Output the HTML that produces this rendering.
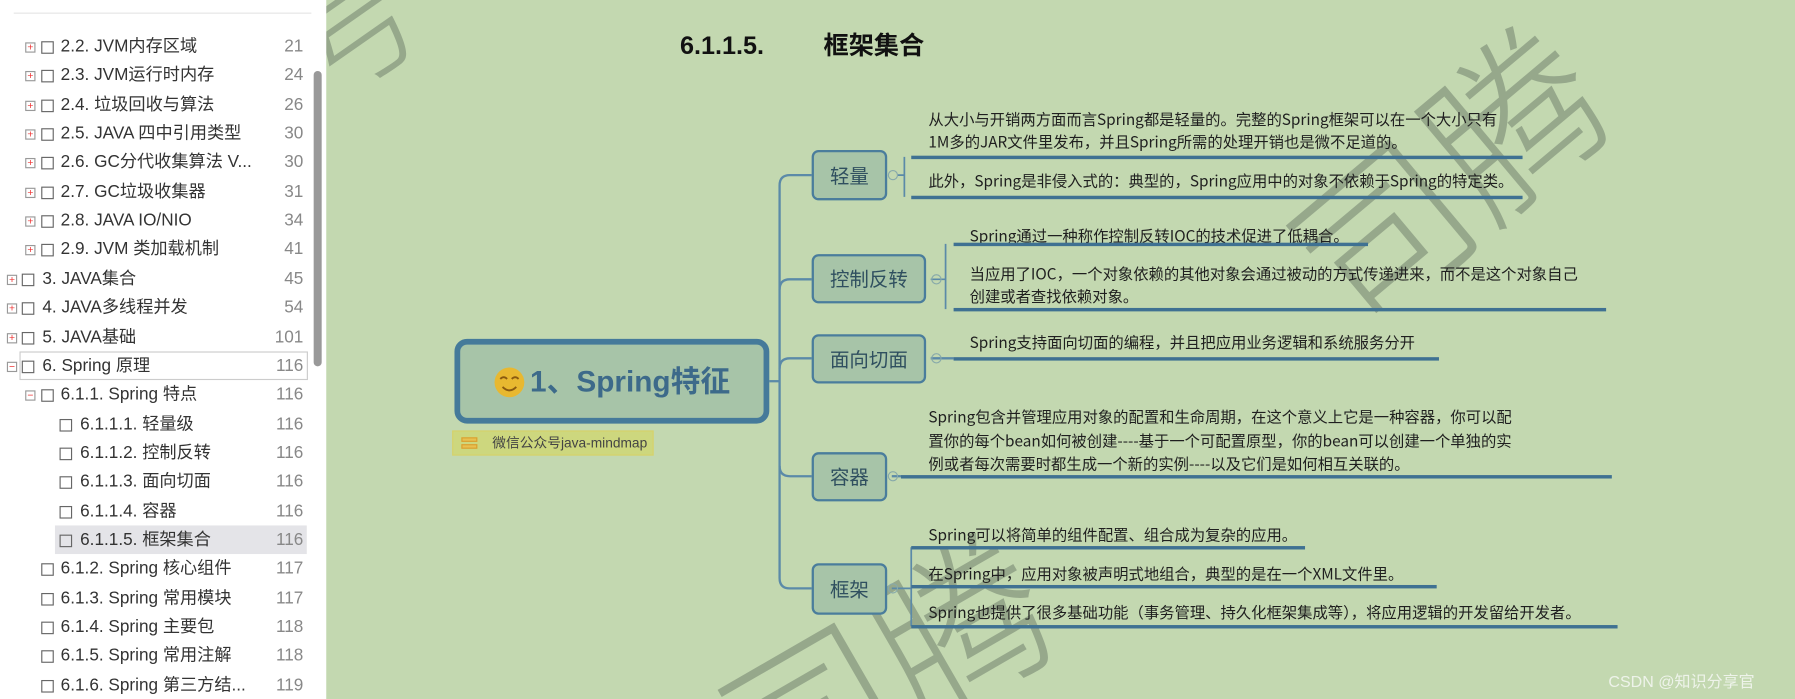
<!DOCTYPE html>
<html><head><meta charset="utf-8"><style>
*{margin:0;padding:0;box-sizing:border-box}
html,body{width:1795px;height:699px;overflow:hidden}
body{background:#c3d8b0;font-family:"Liberation Sans","Noto Sans CJK SC",sans-serif;position:relative}
#w{position:absolute;left:0;top:0;width:1568px;height:611px;transform:scale(1.14477);transform-origin:0 0;overflow:hidden;background:#c3d8b0}
.a{position:absolute;white-space:nowrap}
#sb{position:absolute;left:0;top:0;width:285px;height:611px;background:#fff}
.r{position:absolute;height:22px;line-height:22px;font-size:15px;color:#333}
.n{position:absolute;right:20px;color:#888;font-size:15px}
.pl{position:absolute;width:9px;height:9px;border:1px solid #999;top:7px;font-size:9px;line-height:7px;text-align:center;color:#e33}
.bk{position:absolute;width:11px;height:11px;border:1px solid #666;top:6px}
.node{position:absolute;background:#a7c4a8;border:2.5px solid #4a7d9c;border-radius:6px;font-size:17px;color:#2f4f5f;text-align:center;font-family:"Noto Sans CJK SC",sans-serif}
.t{position:absolute;font-size:13.4px;color:#1f1f1f;white-space:nowrap;line-height:20px;font-family:"Noto Sans CJK SC",sans-serif}
.u{position:absolute;height:3px;background:#3f7192}
.wm{position:absolute;font-size:150px;color:rgba(95,110,95,.45);font-family:"Noto Sans CJK SC",sans-serif;font-weight:300;white-space:nowrap}
</style></head><body><div id="w">
<div class="wm" style="left:1110px;top:40px;transform:rotate(-40deg)">司腾</div>
<div class="wm" style="left:620px;top:470px;transform:rotate(-30deg)">司腾</div>
<div class="wm" style="left:240px;top:-70px;transform:rotate(-35deg);font-size:120px">号</div>
<div id="sb">
<div style="position:absolute;left:12px;top:11px;width:260px;height:1px;background:#e6e6e6"></div>
<div style="position:absolute;left:274px;top:62px;width:7px;height:258px;background:#999;border-radius:4px"></div>
<div style="position:absolute;left:17px;top:307px;width:252px;height:25px;border:1px solid #ccc"></div>
<div style="position:absolute;left:48px;top:459px;width:220px;height:25px;background:#e4e4e8"></div>
</div>
<div id="rows"></div>
<div class="a" style="left:594px;top:22px;font-size:22px;font-weight:bold;color:#111;font-family:'Liberation Sans','Noto Sans CJK SC',sans-serif">6.1.1.5.<span style="margin-left:52px">框架集合</span></div>
<svg class="a" style="left:0;top:0" width="1568" height="611">
<g fill="none" stroke="#5b8aa8" stroke-width="2">
<path d="M672 333H681"/>
<path d="M709 153H690Q681 153 681 162V505Q681 514 690 514H709"/>
<path d="M681 253Q681 244 690 244H709"/><path d="M681 322Q681 313 690 313H709"/><path d="M681 407Q681 416 690 416H709"/>
<path d="M784 153H790M790 137V172" stroke-width="1.5"/>
<path d="M813 244H826M826 213V270" stroke-width="1.5"/>
<path d="M813 313H833"/><path d="M779 416H787"/>
<path d="M779 514H796M796 478V547" stroke-width="1.5"/>
</g>
<g fill="none" stroke="#8aa" stroke-width="1"><circle cx="780" cy="153" r="4"/><circle cx="818" cy="244" r="4"/><circle cx="818" cy="313" r="4"/><circle cx="780" cy="416" r="4"/><circle cx="780" cy="514" r="4"/></g>
</svg>
<div class="a" style="left:397px;top:296px;width:275px;height:74px;border:5px solid #457a9a;border-radius:11px;font-size:26px;font-weight:bold;color:#3d6a8a;line-height:64px;padding-left:61px;font-family:'Liberation Sans','Noto Sans CJK SC',sans-serif;background:#a7c4a8">1、Spring特征
<svg style="position:absolute;left:29px;top:19px" width="28" height="28"><g transform="translate(14,14)"><circle r="13" fill="#e8b830"/><path d="M-8 -3q3 -3 6 0M2 -3q3 -3 6 0M-6 4q6 6 12 0" stroke="#8a5a10" stroke-width="1.6" fill="none"/></g></svg></div>
<div class="a" style="left:395px;top:376px;width:176px;height:22px;background:#cdd77e;border:1px solid #d6d26a;font-size:12px;line-height:20px;color:#444;padding-left:34px;font-family:'Liberation Sans','Noto Sans CJK SC',sans-serif">微信公众号java-mindmap
<span style="position:absolute;left:7px;top:5px;width:14px;height:4px;border:1px solid #d8a030;background:#e8c050"></span><span style="position:absolute;left:7px;top:11px;width:14px;height:4px;border:1px solid #d8a030;background:#e8c050"></span></div>
<div class="node" style="left:709px;top:131px;width:66px;height:44px;line-height:39px">轻量</div>
<div class="node" style="left:709px;top:222px;width:100px;height:43px;line-height:38px">控制反转</div>
<div class="node" style="left:709px;top:292px;width:100px;height:43px;line-height:38px">面向切面</div>
<div class="node" style="left:709px;top:395px;width:66px;height:43px;line-height:38px">容器</div>
<div class="node" style="left:709px;top:492px;width:66px;height:45px;line-height:40px">框架</div>
<div class="t" style="left:811px;top:93px">从大小与开销两方面而言Spring都是轻量的。完整的Spring框架可以在一个大小只有<br>1M多的JAR文件里发布，并且Spring所需的处理开销也是微不足道的。</div>
<div class="u" style="left:796px;top:136px;width:534px"></div>
<div class="t" style="left:811px;top:147px">此外，Spring是非侵入式的：典型的，Spring应用中的对象不依赖于Spring的特定类。</div>
<div class="u" style="left:796px;top:171px;width:534px"></div>
<div class="t" style="left:847px;top:195px">Spring通过一种称作控制反转IOC的技术促进了低耦合。</div>
<div class="u" style="left:833px;top:212px;width:362px"></div>
<div class="t" style="left:847px;top:228px">当应用了IOC，一个对象依赖的其他对象会通过被动的方式传递进来，而不是这个对象自己<br>创建或者查找依赖对象。</div>
<div class="u" style="left:833px;top:269px;width:570px"></div>
<div class="t" style="left:847px;top:288px">Spring支持面向切面的编程，并且把应用业务逻辑和系统服务分开</div>
<div class="u" style="left:833px;top:312px;width:424px"></div>
<div class="t" style="left:811px;top:353px;line-height:20.5px">Spring包含并管理应用对象的配置和生命周期，在这个意义上它是一种容器，你可以配<br>置你的每个bean如何被创建----基于一个可配置原型，你的bean可以创建一个单独的实<br>例或者每次需要时都生成一个新的实例----以及它们是如何相互关联的。</div>
<div class="u" style="left:787px;top:415px;width:621px"></div>
<div class="t" style="left:811px;top:456px">Spring可以将简单的组件配置、组合成为复杂的应用。</div>
<div class="u" style="left:796px;top:477px;width:344px"></div>
<div class="t" style="left:811px;top:490px">在Spring中，应用对象被声明式地组合，典型的是在一个XML文件里。</div>
<div class="u" style="left:796px;top:511px;width:459px"></div>
<div class="t" style="left:811px;top:524px">Spring也提供了很多基础功能（事务管理、持久化框架集成等），将应用逻辑的开发留给开发者。</div>
<div class="u" style="left:796px;top:546px;width:617px"></div>
<div class="a" style="left:1405px;top:585px;font-size:14px;color:#eef3ea;font-family:'Liberation Sans','Noto Sans CJK SC',sans-serif">CSDN @知识分享官</div>
</div>
<script>
var d=[[2,1,"2.2. JVM内存区域",21],[2,1,"2.3. JVM运行时内存",24],[2,1,"2.4. 垃圾回收与算法",26],[2,1,"2.5. JAVA 四中引用类型",30],[2,1,"2.6. GC分代收集算法  V...",30],[2,1,"2.7. GC垃圾收集器",31],[2,1,"2.8.  JAVA IO/NIO",34],[2,1,"2.9. JVM 类加载机制",41],[1,1,"3. JAVA集合",45],[1,1,"4. JAVA多线程并发",54],[1,1,"5. JAVA基础",101],[1,2,"6. Spring 原理",116],[2,2,"6.1.1. Spring 特点",116],[3,0,"6.1.1.1. 轻量级",116],[3,0,"6.1.1.2. 控制反转",116],[3,0,"6.1.1.3. 面向切面",116],[3,0,"6.1.1.4. 容器",116],[3,0,"6.1.1.5. 框架集合",116],[2,0,"6.1.2. Spring 核心组件",117],[2,0,"6.1.3. Spring 常用模块",117],[2,0,"6.1.4. Spring 主要包",118],[2,0,"6.1.5. Spring 常用注解",118],[2,0,"6.1.6. Spring 第三方结...",119]];
var h="";d.forEach(function(r,i){var y=30+i*25.35,l=r[0],px=l==1?6:22,bx=l==1?19:l==2?36:52,tx=l==1?37:l==2?53:70;
h+='<div class="r" style="left:0;top:'+y+'px;width:285px">'+(r[1]?'<div class="pl" style="left:'+px+'px">'+(r[1]==1?'+':'−')+'</div>':'')+'<div class="bk" style="left:'+bx+'px"></div><div class="a" style="left:'+tx+'px">'+r[2]+'</div><div class="n">'+r[3]+'</div></div>';});
document.getElementById("rows").innerHTML=h;
</script>
</body></html>
